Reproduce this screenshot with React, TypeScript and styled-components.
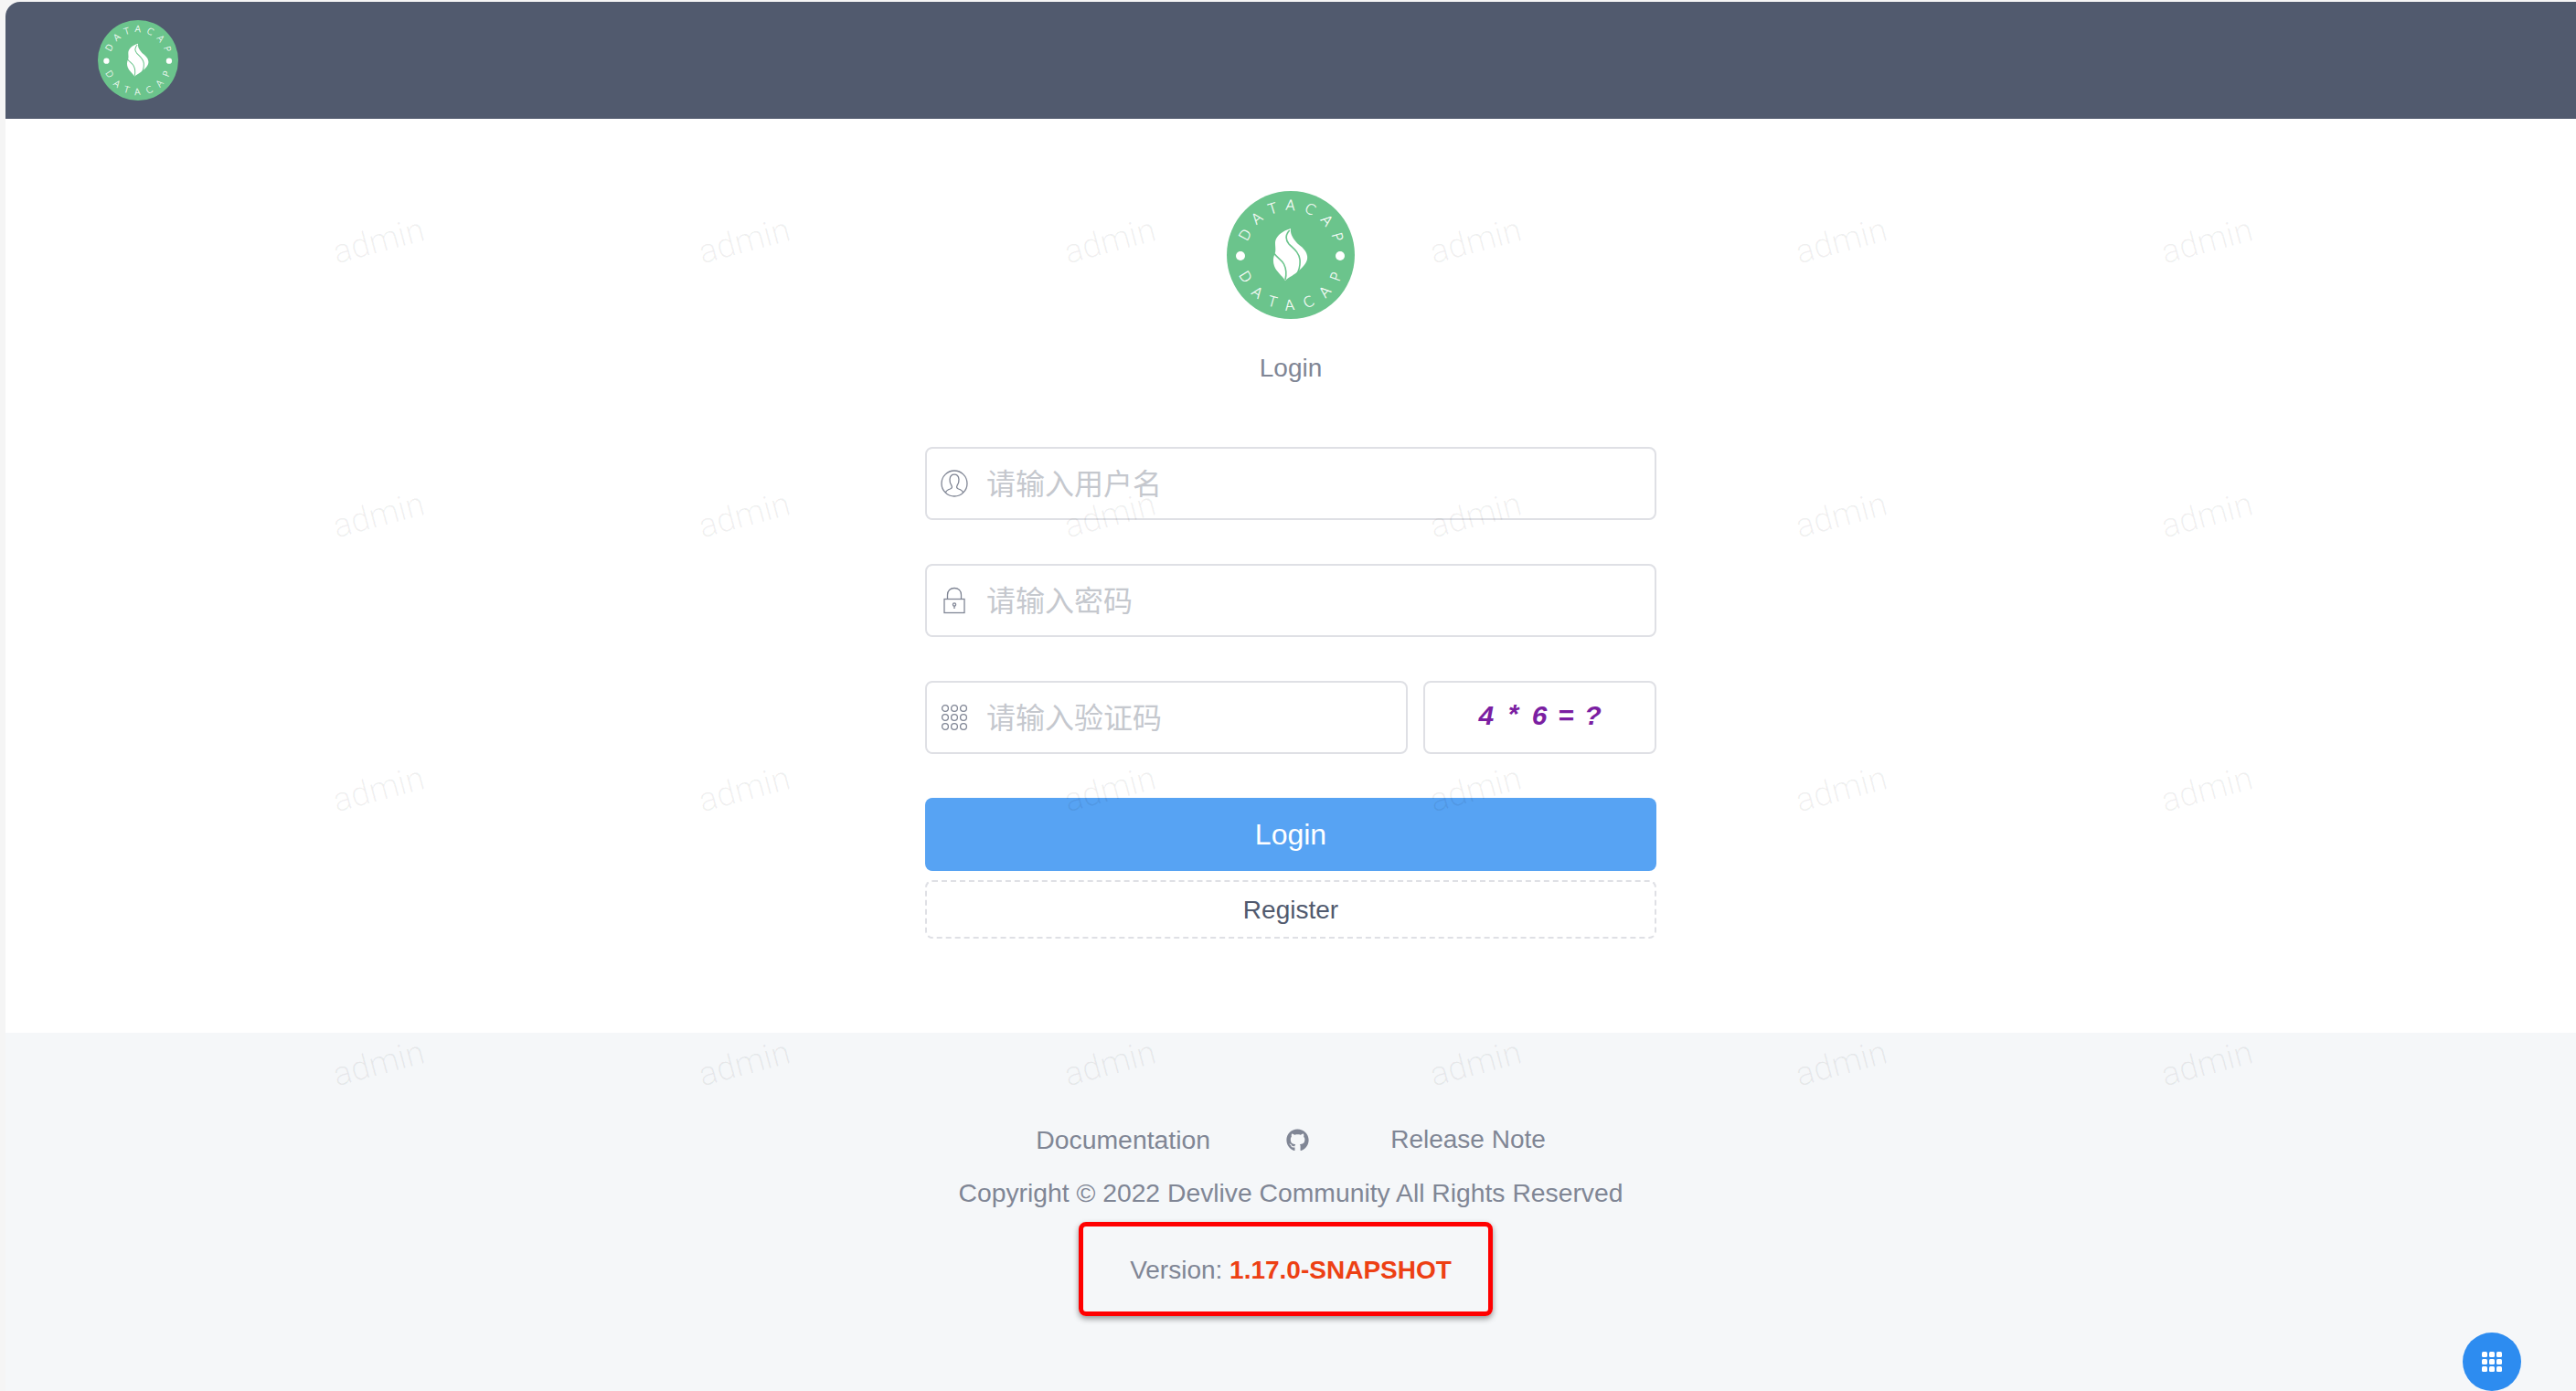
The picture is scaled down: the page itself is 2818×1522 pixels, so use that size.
import React from "react";
import styled, { createGlobalStyle } from "styled-components";
import { FaGithub } from "react-icons/fa";

const Global = createGlobalStyle`
  html, body { margin: 0; padding: 0; background: #f5f5f5; }
  body { font-family: "Liberation Sans", "Noto Sans CJK SC", sans-serif; }
  * { box-sizing: border-box; }
`;

const Page = styled.div`
  position: relative;
  width: 2818px;
  height: 1522px;
  padding: 2px 0 0 6px;
  overflow: hidden;
`;

const Shell = styled.div`
  height: 1520px;
  display: flex;
  flex-direction: column;
  border-top-left-radius: 16px;
  overflow: hidden;
  background: #fff;
`;

const Header = styled.header`
  height: 128px;
  flex: none;
  display: flex;
  align-items: center;
  padding-left: 101px;
  background: #515a6e;
`;

const Main = styled.main`
  height: 1000px;
  flex: none;
  padding-top: 79px;
  display: flex;
  flex-direction: column;
  align-items: center;
  background: #fff;
`;

const LogoBox = styled.div<{ $size: number }>`
  width: ${(p) => p.$size}px;
  height: ${(p) => p.$size}px;
  flex: none;
  svg { display: block; width: 100%; height: 100%; }
`;

const Title = styled.div`
  margin: 32px 0 64px;
  font-size: 28px;
  line-height: 44px;
  color: #808695;
`;

const Form = styled.form`
  width: 800px;
  display: flex;
  flex-direction: column;
`;

const Row = styled.div`
  display: flex;
  gap: 17px;
  margin-bottom: 48px;
`;

const Field = styled.label`
  flex: 1;
  min-width: 0;
  height: 80px;
  display: flex;
  align-items: center;
  gap: 20px;
  padding-left: 15px;
  background: transparent;
  border: 2px solid #dfe0e5;
  border-radius: 8px;
`;

const FieldIcon = styled.svg`
  width: 30px;
  height: 30px;
  flex: none;
  fill: none;
  stroke: #808695;
  stroke-width: 1.3;
`;

const Input = styled.input`
  flex: 1;
  min-width: 0;
  height: 100%;
  padding: 0 0 4px;
  border: 0;
  outline: 0;
  background: transparent;
  font-family: "Noto Sans CJK SC", "Liberation Sans", sans-serif;
  font-size: 32px;
  color: #515a6e;
  &::placeholder { color: #c5c8ce; opacity: 1; }
`;

const Captcha = styled.div`
  width: 255px;
  height: 80px;
  flex: none;
  display: flex;
  align-items: center;
  justify-content: center;
  padding-right: 4px;
  border: 2px solid #dfe0e5;
  border-radius: 8px;
  font-family: "Liberation Mono", monospace;
  font-size: 30px;
  font-weight: 700;
  font-style: italic;
  letter-spacing: -3.4px;
  color: #7b1fa2;
  white-space: pre;
`;

const LoginButton = styled.button`
  height: 80px;
  padding: 0;
  border: 0;
  border-radius: 8px;
  background: #57a3f3;
  color: #fff;
  font-family: inherit;
  font-size: 32px;
`;

const RegisterButton = styled.button`
  height: 64px;
  margin-top: 10px;
  padding: 2px 0 0;
  background: #fff;
  border: 2px dashed #dfe0e5;
  border-radius: 8px;
  color: #515a6e;
  font-family: inherit;
  font-size: 28px;
`;

const Footer = styled.footer`
  flex: 1;
  padding-top: 88px;
  display: flex;
  flex-direction: column;
  align-items: center;
  background: #f5f7f9;
  font-size: 28px;
  line-height: 58px;
  color: #808695;
`;

const Links = styled.div`
  display: flex;
  align-items: center;
  gap: 83px;
`;

const LinkText = styled.span<{ $size: number }>`
  font-size: ${(p) => p.$size}px;
`;

const Github = styled(FaGithub)`
  width: 25px;
  height: 25px;
  display: block;
  margin-right: 6px;
  color: #808695;
`;

const Copyright = styled.div`
  font-size: 28.3px;
`;

const VersionLine = styled.div`
  position: relative;
  margin-top: 27px;
`;

const Strong = styled.b`
  color: #ed4014;
`;

const RedBox = styled.span`
  position: absolute;
  left: -56px;
  right: -45px;
  top: -24px;
  bottom: -21px;
  border: 5px solid #ff0000;
  border-radius: 8px;
  box-shadow: 0 3px 6px rgba(0, 0, 0, 0.4);
`;

const FloatButton = styled.div`
  position: absolute;
  left: 2694px;
  top: 1458px;
  width: 64px;
  height: 64px;
  border-radius: 50%;
  background: #2d8cf0;
  display: grid;
  place-items: center;
  svg { display: block; width: 22px; height: 24px; fill: #fff; }
`;

const Watermarks = styled.div`
  position: absolute;
  inset: 0;
  pointer-events: none;
  padding: 113px 0 0 214px;
  display: grid;
  grid-template-columns: repeat(6, 400px);
  grid-auto-rows: 300px;
`;

const Mark = styled.div`
  display: flex;
  align-items: center;
  justify-content: center;
  font-family: Roboto, sans-serif;
  font-weight: 300;
  font-size: 37px;
  color: rgba(0, 0, 0, 0.06);
  transform: rotate(-15deg);
`;

const Logo = () => (
  <svg viewBox="0 0 140 140">
    <defs>
      <path id="arcTop" d="M21 70 A49 49 0 0 1 119 70" />
      <path id="arcBottom" d="M10 70 A60 60 0 0 0 130 70" />
    </defs>
    <circle cx="70" cy="70" r="70" fill="#6bc48c" />
    <g fill="#fff" stroke="#fff" strokeWidth="0.25" fontFamily="'DejaVu Sans', sans-serif" fontWeight="200" fontSize="15.5">
      <text letterSpacing="9.2">
        <textPath href="#arcTop" startOffset="53%" textAnchor="middle">DATACAP</textPath>
      </text>
      <text letterSpacing="12.4">
        <textPath href="#arcBottom" startOffset="53.3%" textAnchor="middle">DATACAP</textPath>
      </text>
    </g>
    <circle cx="15" cy="71" r="5" fill="#fff" />
    <circle cx="124" cy="71" r="5" fill="#fff" />
    <path
      fill="#fff"
      d="M70 41 C60 44 53 50 53 57 C53 62 54 65 52.5 69 C50.5 73 50.5 78 52 82 C54 88 60 92 64 98 C68 94 74 92 79 87 C85 82 89 77 88 71 C87 65 82 61 78 58 C74 54 69 48 70 41 Z"
    />
    <path
      fill="none"
      stroke="#6bc48c"
      strokeWidth="1.6"
      d="M68.7 43 C64 48 64 53 68 58 C73 63 79 67 80 75 C80.5 81 79 87 76.5 91"
    />
    <path
      fill="none"
      stroke="#6bc48c"
      strokeWidth="1.6"
      d="M52 68.5 C55 73 60 75 62.5 80 C65 85 65.5 91 64 97"
    />
  </svg>
);

const UserIcon = () => (
  <FieldIcon viewBox="0 0 30 30">
    <circle cx="15" cy="15" r="14" />
    <path d="M5.5 25 C6 22.5 8 21.8 10.5 21 C12.5 20.3 12.8 19 12 17.5 C10.5 15.5 9.8 13 10 10.5 C10.3 7 12.3 5.2 15 5.2 C17.7 5.2 19.7 7 20 10.5 C20.2 13 19.5 15.5 18 17.5 C17.2 19 17.5 20.3 19.5 21 C22 21.8 24 22.5 24.5 25" />
  </FieldIcon>
);

const LockIcon = () => (
  <FieldIcon viewBox="0 0 30 30">
    <rect x="4" y="13.5" width="22" height="15" />
    <path d="M7.5 13.5 V9 C7.5 4.5 10.5 1.5 15 1.5 C19.5 1.5 22.5 4.5 22.5 9 V13.5" />
    <circle cx="15" cy="19.5" r="1.6" />
    <path d="M15 21 V24" />
  </FieldIcon>
);

const KeypadIcon = () => (
  <FieldIcon viewBox="0 0 30 30">
    {[5, 15, 25].flatMap((y) =>
      [5, 15, 25].map((x) => <circle key={`${x}-${y}`} cx={x} cy={y} r="3.4" />)
    )}
  </FieldIcon>
);

const marks = Array.from({ length: 24 }, (_, i) => i);

export default function App() {
  return (
    <Page>
      <Global />
      <Shell>
        <Header>
          <LogoBox $size={88}><Logo /></LogoBox>
        </Header>
        <Main>
          <LogoBox $size={140}><Logo /></LogoBox>
          <Title>Login</Title>
          <Form>
            <Row>
              <Field><UserIcon /><Input placeholder="请输入用户名" /></Field>
            </Row>
            <Row>
              <Field><LockIcon /><Input placeholder="请输入密码" /></Field>
            </Row>
            <Row>
              <Field><KeypadIcon /><Input placeholder="请输入验证码" /></Field>
              <Captcha>4 * 6 = ?</Captcha>
            </Row>
            <LoginButton type="button">Login</LoginButton>
            <RegisterButton type="button">Register</RegisterButton>
          </Form>
        </Main>
        <Footer>
          <Links>
            <LinkText $size={28.4}>Documentation</LinkText>
            <Github />
            <LinkText $size={28}>Release Note</LinkText>
          </Links>
          <Copyright>Copyright © 2022 Devlive Community All Rights Reserved</Copyright>
          <VersionLine>
            Version: <Strong>1.17.0-SNAPSHOT</Strong>
            <RedBox />
          </VersionLine>
        </Footer>
      </Shell>
      <FloatButton>
        <svg viewBox="0 0 22 24">
          {[1, 9, 17].flatMap((y) =>
            [0, 8, 16].map((x) => <rect key={`${x}-${y}`} x={x} y={y} width="6" height="6" rx="1.5" />)
          )}
        </svg>
      </FloatButton>
      <Watermarks>
        {marks.map((m) => <Mark key={m}>admin</Mark>)}
      </Watermarks>
    </Page>
  );
}
